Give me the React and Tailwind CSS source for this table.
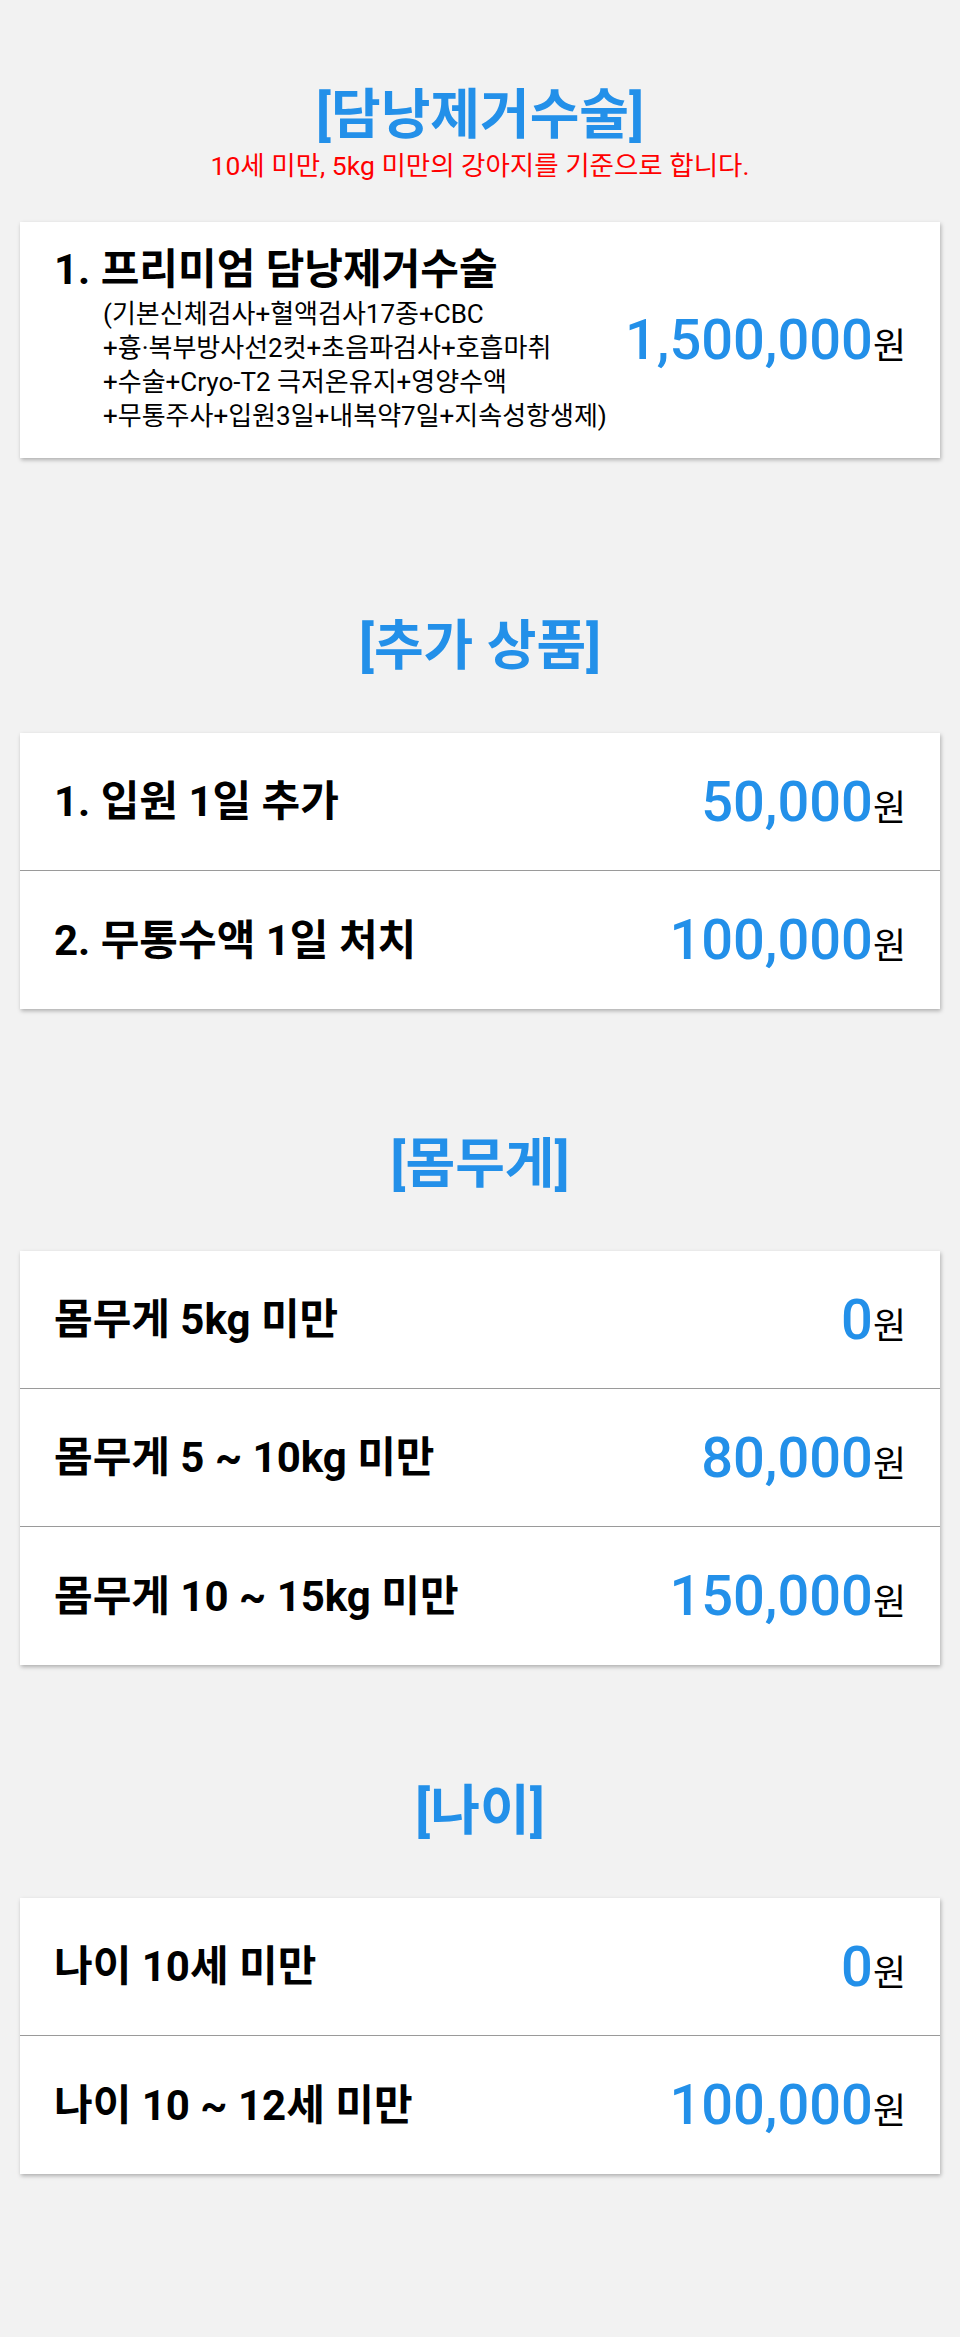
import React from "react";

const sections = [
  {
    title: "[추가 상품]",
    gap: "mt-[160px]",
    rows: [
      { label: "1. 입원 1일 추가", price: "50,000" },
      { label: "2. 무통수액 1일 처치", price: "100,000" },
    ],
  },
  {
    title: "[몸무게]",
    gap: "mt-[127px]",
    rows: [
      { label: "몸무게 5kg 미만", price: "0" },
      { label: "몸무게 5 ~ 10kg 미만", price: "80,000" },
      { label: "몸무게 10 ~ 15kg 미만", price: "150,000" },
    ],
  },
  {
    title: "[나이]",
    gap: "mt-[118px]",
    rows: [
      { label: "나이 10세 미만", price: "0" },
      { label: "나이 10 ~ 12세 미만", price: "100,000" },
    ],
  },
];

const Price = ({ value }) => (
  <div className="shrink-0 whitespace-nowrap">
    <span className="text-[56px] font-medium text-[#2390e9] leading-none">{value}</span>
    <span className="text-[36px] text-black leading-none">원</span>
  </div>
);

const SectionTitle = ({ children }) => (
  <h2 className="text-center text-[54px] leading-[58px] font-bold text-[#2390e9]">{children}</h2>
);

const Card = ({ children }) => (
  <div className="mx-[20px] bg-white shadow-[1px_2px_4px_rgba(0,0,0,0.28)]">{children}</div>
);

export default function App() {
  return (
    <div className="min-h-screen bg-[#f2f2f2] pt-[87px] pb-[164px] font-['Roboto','Noto_Sans_CJK_KR',sans-serif] text-black">
      {/* 메인 수술 */}
      <SectionTitle>[담낭제거수술]</SectionTitle>
      <p className="mt-[6px] text-center text-[26.5px] leading-[30px] text-[#ff0000]">
        10세 미만, 5kg 미만의 강아지를 기준으로 합니다.
      </p>

      <div className="mt-[41px]">
        <Card>
          <div className="flex items-center justify-between px-[34px] pt-[25px] pb-[25px]">
            <div>
              <h3 className="text-[42px] leading-[46px] font-bold">1. 프리미엄 담낭제거수술</h3>
              <p className="mt-[4px] pl-[49px] text-[26px] leading-[34px]">
                (기본신체검사+혈액검사17종+CBC
                <br />
                +흉·복부방사선2컷+초음파검사+호흡마취
                <br />
                +수술+Cryo-T2 극저온유지+영양수액
                <br />
                +무통주사+입원3일+내복약7일+지속성항생제)
              </p>
            </div>
            <Price value="1,500,000" />
          </div>
        </Card>
      </div>

      {sections.map((s) => (
        <div key={s.title} className={s.gap}>
          <SectionTitle>{s.title}</SectionTitle>
          <div className="mt-[57px]">
            <Card>
              {s.rows.map((r, i) => (
                <div
                  key={r.label}
                  className={`flex h-[138px] items-center justify-between px-[34px] ${i < s.rows.length - 1 ? "border-b border-[#9a9a9a]" : ""}`}
                >
                  <span className="text-[42px] font-bold">{r.label}</span>
                  <Price value={r.price} />
                </div>
              ))}
            </Card>
          </div>
        </div>
      ))}
    </div>
  );
}
